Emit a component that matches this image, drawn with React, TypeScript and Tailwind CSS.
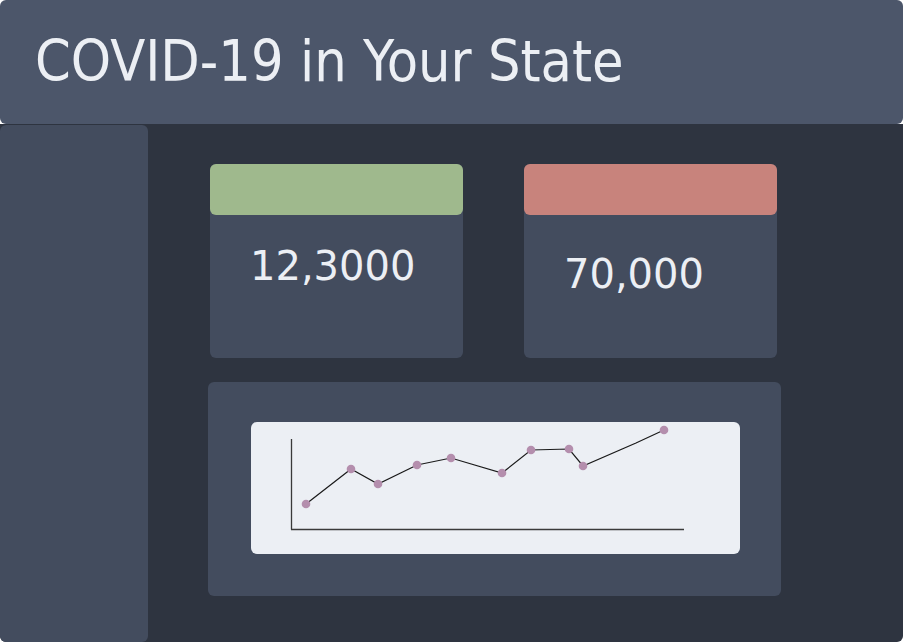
const points: [number, number][] = [
  [306, 504],
  [351, 469],
  [378, 484],
  [417, 465],
  [451, 458],
  [502, 473],
  [531, 450],
  [569, 449],
  [583, 466],
  [664, 430],
];

const StatCard = ({
  value,
  color,
  offset,
}: {
  value: string;
  color: string;
  offset: string;
}) => {
  return (
    <div className="w-[253px] h-[194px] rounded-md bg-[#434c5e] flex flex-col">
      <div className={`h-[51px] rounded-md ${color}`} />
      <p
        className={`${offset} text-[40px] leading-[46px] text-[#eceff4]`}
        style={{ fontFamily: '"DejaVu Sans", sans-serif' }}
      >
        {value}
      </p>
    </div>
  );
};

const Chart = () => {
  // coordinates relative to the white panel (251, 422)
  const ox = 251;
  const oy = 422;
  const line = [...points.slice(0, 9), [636, 443] as [number, number], points[9]];
  return (
    <svg width="489" height="132" viewBox="0 0 489 132">
      <line x1={291.5 - ox} y1={439 - oy} x2={291.5 - ox} y2={529.5 - oy} stroke="#3a3a3a" strokeWidth="1.3" />
      <line x1={291 - ox} y1={529.5 - oy} x2={684 - ox} y2={529.5 - oy} stroke="#3a3a3a" strokeWidth="1.3" />
      <polyline
        points={line.map(([x, y]) => `${x - ox},${y - oy}`).join(" ")}
        fill="none"
        stroke="#1a1a1a"
        strokeWidth="1.2"
      />
      {points.map(([x, y], i) => (
        <circle key={i} cx={x - ox} cy={y - oy} r="4.3" fill="#b48ead" />
      ))}
    </svg>
  );
};

export default function App() {
  return (
    <div className="w-[903px] h-[642px] bg-white flex flex-col">
      <header className="h-[124px] shrink-0 rounded-md bg-[#4c566a] flex items-center pl-[35px]">
        <h1
          className="text-[57px] leading-none text-[#eceff4] pb-[2px]"
          style={{ fontFamily: '"DejaVu Sans Condensed", "DejaVu Sans", sans-serif', fontStretch: "condensed" }}
        >
          COVID-19 in Your State
        </h1>
      </header>
      <div className="flex-1 flex bg-[#2e3440] rounded-b-md pt-px">
        <aside className="w-[148px] rounded-md bg-[#434c5e]" />
        <main className="flex-1 pl-[60px] pt-[39px] flex flex-col">
          <div className="flex gap-[61px] ml-[2px]">
            <StatCard value="12,3000" color="bg-[#9fb98d]" offset="pt-[28px] pl-[40px]" />
            <StatCard value="70,000" color="bg-[#c8837c]" offset="pt-[36px] pl-[40px]" />
          </div>
          <div className="mt-[24px] w-[573px] h-[214px] rounded-md bg-[#434c5e] pl-[43px] pt-[40px]">
            <div className="w-[489px] h-[132px] rounded-md bg-[#eceff4]">
              <Chart />
            </div>
          </div>
        </main>
      </div>
    </div>
  );
}
